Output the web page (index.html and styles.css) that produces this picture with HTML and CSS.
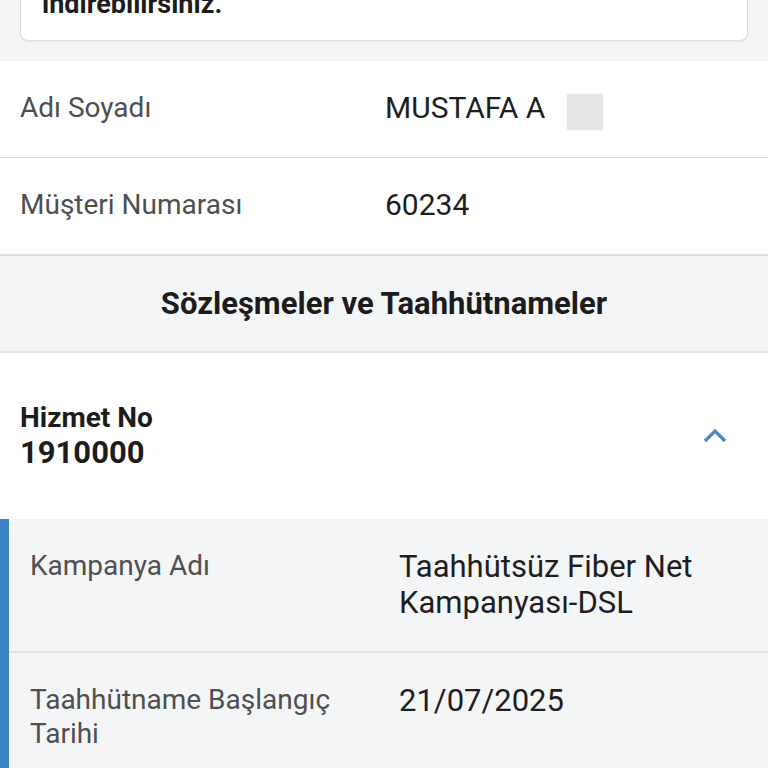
FILE: index.html
```html
<!DOCTYPE html>
<html lang="tr">
<head>
<meta charset="utf-8">
<link rel="stylesheet" href="styles.css">
</head>
<body>
<div class="top">
  <div class="card"><p class="card-text">indirebilirsiniz.</p></div>
</div>
<div class="info">
  <div class="info-row">
    <span class="info-label">Adı Soyadı</span>
    <span class="info-value">MUSTAFA A<span class="redact"></span></span>
  </div>
  <div class="info-row">
    <span class="info-label">Müşteri Numarası</span>
    <span class="info-value">60234</span>
  </div>
</div>
<div class="section-head">Sözleşmeler ve Taahhütnameler</div>
<div class="service">
  <div class="service-text">
    <div class="service-title">Hizmet No</div>
    <div class="service-no">1910000</div>
  </div>
  <svg class="chevron" width="26" height="16" viewBox="0 0 26 16"><path d="M3 13 L13 3 L23 13" fill="none" stroke="#4a86c0" stroke-width="3.2"/></svg>
</div>
<div class="details">
  <div class="detail-row first">
    <div class="detail-label">Kampanya Adı</div>
    <div class="detail-value">Taahhütsüz Fiber Net Kampanyası-DSL</div>
  </div>
  <div class="detail-row">
    <div class="detail-label">Taahhütname Başlangıç Tarihi</div>
    <div class="detail-value">21/07/2025</div>
  </div>
</div>
</body>
</html>
```
FILE: styles.css
```css
html, body {
  margin: 0;
  padding: 0;
  background: #ffffff;
  font-family: Roboto, "Noto Sans", sans-serif;
  color: #212121;
  overflow: hidden;
}
.top {
  background: #f4f5f7;
  padding: 0 20px 20px;
}
.card {
  background: #ffffff;
  border: 1px solid #dcdde0;
  border-top: none;
  border-radius: 0 0 8px 8px;
  box-shadow: 0 1px 2px rgba(0,0,0,0.06);
  height: 40px;
  overflow: hidden;
  padding: 0 21px;
}
.card-text {
  margin: -12px 0 0;
  font-size: 27px;
  font-weight: 700;
  line-height: 32px;
  color: #1c1c1c;
}
.info-row {
  display: grid;
  grid-template-columns: 365px 1fr;
  align-items: center;
  height: 96px;
  padding-left: 20px;
  border-bottom: 1px solid #dddddd;
}
.info-row:last-child {
  border-bottom: 2px solid #dedfe2;
}
.info-label {
  font-size: 28px;
  color: #4f4f4f;
  margin-top: -4px;
}
.info-value {
  font-size: 30px;
  color: #1e1e1e;
  display: flex;
  align-items: center;
  margin-top: -4px;
}
.redact {
  display: inline-block;
  width: 36px;
  height: 36px;
  background: #e6e6e6;
  margin-left: 22px;
  margin-top: 10px;
}
.section-head {
  background: #f4f5f7;
  height: 95px;
  display: flex;
  align-items: center;
  justify-content: center;
  font-size: 31px;
  font-weight: 700;
  color: #1c1c1c;
  border-bottom: 2px solid #e3e4e7;
}
.service {
  height: 166px;
  display: flex;
  align-items: center;
  justify-content: space-between;
  padding: 0 40px 0 20px;
}
.service-text {
  font-weight: 700;
  color: #1c1c1c;
}
.service-title {
  font-size: 28px;
  line-height: 34px;
}
.service-no {
  font-size: 31px;
  line-height: 36px;
}
.chevron {
  display: block;
}
.details {
  background: #f4f5f7;
  border-left: 9px solid #3d83c4;
}
.detail-row {
  display: grid;
  grid-template-columns: 369px 1fr;
  padding: 30px 0 30px 21px;
  border-bottom: 2px solid #e2e3e6;
}
.detail-row.first {
  height: 72px;
}
.detail-label {
  font-size: 28px;
  line-height: 34px;
  color: #4f4f4f;
  padding-right: 20px;
}
.detail-value {
  font-size: 31px;
  line-height: 36px;
  color: #1e1e1e;
  padding-right: 50px;
}
```
